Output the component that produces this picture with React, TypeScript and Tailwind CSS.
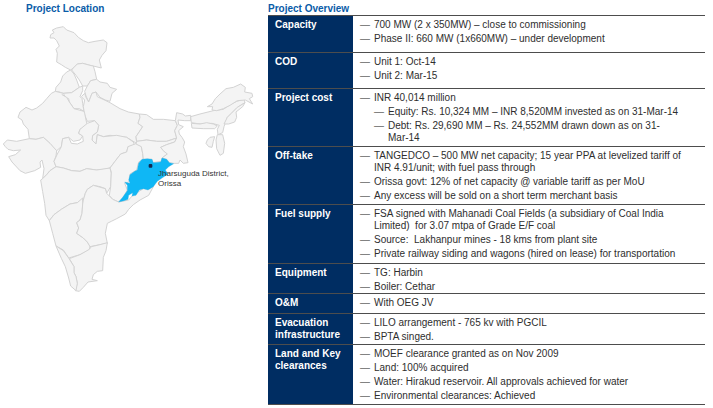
import { Fragment } from "react";

type Item = { lines: string[]; nested?: boolean };
type Row = { label: string[]; height: string; items: Item[] };

const rows: Row[] = [
  {
    label: ["Capacity"],
    height: "h-[37px]",
    items: [
      { lines: ["700 MW (2 x 350MW) – close to commissioning"] },
      { lines: ["Phase II: 660 MW (1x660MW) – under development"] },
    ],
  },
  {
    label: ["COD"],
    height: "h-9",
    items: [{ lines: ["Unit 1: Oct-14"] }, { lines: ["Unit 2: Mar-15"] }],
  },
  {
    label: ["Project cost"],
    height: "h-[58px]",
    items: [
      { lines: ["INR 40,014 million"] },
      { lines: ["Equity: Rs. 10,324 MM – INR 8,520MM invested as on 31-Mar-14"], nested: true },
      { lines: ["Debt: Rs. 29,690 MM – Rs. 24,552MM drawn down as on 31-", "Mar-14"], nested: true },
    ],
  },
  {
    label: ["Off-take"],
    height: "h-[58px]",
    items: [
      { lines: ["TANGEDCO – 500 MW net capacity; 15 year PPA at levelized tariff of", "INR 4.91/unit; with fuel pass through"] },
      { lines: ["Orissa govt: 12% of net capacity @ variable tariff as per MoU"] },
      { lines: ["Any excess will be sold on a short term merchant basis"] },
    ],
  },
  {
    label: ["Fuel supply"],
    height: "h-[59px]",
    items: [
      { lines: ["FSA signed with Mahanadi Coal Fields (a subsidiary of Coal India", "Limited)\u00a0 for 3.07 mtpa of Grade E/F coal"] },
      { lines: ["Source:\u00a0 Lakhanpur mines - 18 kms from plant site"] },
      { lines: ["Private railway siding and wagons (hired on lease) for transportation"] },
    ],
  },
  {
    label: ["Equipment"],
    height: "h-[30px]",
    items: [{ lines: ["TG: Harbin"] }, { lines: ["Boiler: Cethar"] }],
  },
  { label: ["O&M"], height: "h-5", items: [{ lines: ["With OEG JV"] }] },
  {
    label: ["Evacuation", "infrastructure"],
    height: "h-[31px]",
    items: [{ lines: ["LILO arrangement - 765 kv with PGCIL"] }, { lines: ["BPTA singed."] }],
  },
  {
    label: ["Land and Key", "clearances"],
    height: "h-[60px]",
    items: [
      { lines: ["MOEF clearance granted as on Nov 2009"] },
      { lines: ["Land: 100% acquired"] },
      { lines: ["Water: Hirakud reservoir. All approvals achieved for water"] },
      { lines: ["Environmental clearances: Achieved"] },
    ],
  },
];

const states: string[] = [
  // Jammu & Kashmir
  "M157,90 L170,84 190,80 200,90 222,98 235,112 250,122 265,128 285,124 310,120 321,128 318,152 306,166 298,180 304,204 288,200 270,196 248,190 232,192 220,204 212,210 196,202 184,194 170,186 172,160 168,148 178,138 170,122 162,114 150,114 152,104 162,98 Z",
  // Himachal Pradesh
  "M232,192 L248,190 270,196 280,198 285,215 290,238 272,242 262,258 248,258 238,240 228,226 215,210 220,204 Z",
  // Punjab
  "M212,210 L200,216 188,228 182,246 168,262 166,274 178,276 190,280 215,278 238,262 230,240 222,222 Z",
  // Haryana
  "M190,280 L196,292 206,296 208,306 222,326 238,326 252,334 248,310 246,296 240,290 248,272 248,258 238,262 215,278 Z",
  // Uttarakhand
  "M290,238 L300,246 322,250 330,262 350,268 336,280 330,304 316,300 300,292 288,276 276,280 266,306 258,288 254,274 262,258 272,242 Z",
  // Uttar Pradesh
  "M276,280 L288,276 292,290 330,308 360,326 385,336 418,342 420,352 414,370 428,380 420,392 408,410 410,430 396,422 380,412 350,408 330,406 310,410 292,404 288,432 276,420 278,406 292,396 296,376 284,362 262,364 254,345 250,320 254,300 244,290 254,280 258,292 266,306 Z",
  // Rajasthan
  "M166,274 L154,280 140,296 128,310 110,324 96,330 78,322 60,336 54,352 66,360 70,372 84,388 88,416 108,418 130,412 150,430 162,446 170,452 184,440 188,416 206,412 220,424 240,420 248,408 236,400 240,388 262,376 258,360 254,340 252,334 222,326 208,306 200,292 186,284 190,280 Z",
  // Gujarat
  "M10,432 L22,420 50,424 88,416 108,418 130,412 150,430 170,452 168,468 162,484 168,500 150,512 140,524 128,536 132,506 126,480 120,486 122,502 104,512 76,520 60,512 36,486 26,470 46,464 62,450 40,452 24,448 16,440 Z",
  // Madhya Pradesh
  "M188,416 L206,412 214,430 232,432 250,424 248,408 236,400 240,388 262,370 284,362 296,376 292,396 278,406 276,420 288,432 292,404 310,410 350,406 380,412 400,426 404,436 384,440 380,456 362,462 345,484 330,504 312,508 290,510 260,506 240,514 215,512 190,504 168,500 162,484 172,462 184,440 Z",
  // Maharashtra
  "M128,536 L140,524 150,512 168,500 190,504 215,512 240,514 260,506 290,510 330,504 334,520 332,560 320,580 316,566 300,560 280,556 262,568 256,580 250,600 232,608 210,612 184,628 162,644 148,662 138,646 134,610 128,575 122,540 Z",
  // Chhattisgarh
  "M410,430 L424,440 428,460 430,478 416,486 410,510 390,522 388,545 374,550 382,570 370,592 356,606 338,598 328,586 332,560 334,516 330,504 345,484 362,462 380,456 384,440 Z",
  // Karnataka
  "M148,662 L162,644 184,628 210,612 232,608 248,594 248,612 246,640 240,660 230,668 236,684 230,700 250,714 262,726 270,738 268,750 240,764 206,774 190,750 168,738 158,700 Z",
  // Andhra Pradesh
  "M256,580 L262,568 280,556 316,566 320,580 338,598 356,606 386,600 396,588 430,566 460,560 446,586 420,600 400,614 386,628 376,642 350,656 334,664 322,670 316,700 322,730 300,734 270,740 262,726 250,714 230,700 236,684 230,668 240,660 246,640 248,612 250,600 Z",
  // Tamil Nadu
  "M322,728 L318,752 310,772 308,812 292,814 280,824 276,838 292,842 264,846 250,862 238,874 226,872 232,850 228,830 222,818 222,800 208,776 240,764 268,748 274,740 300,734 Z",
  // Kerala
  "M168,738 L190,752 206,774 222,800 222,818 228,830 232,850 228,872 212,858 206,834 196,800 184,775 Z",
  // Bihar
  "M418,342 L440,344 460,358 490,358 526,362 532,376 524,392 530,414 500,424 470,424 440,420 410,424 408,410 420,392 428,380 414,370 420,352 Z",
  // Jharkhand
  "M410,424 L440,420 470,424 500,424 530,414 524,426 500,434 482,442 490,452 502,462 486,474 484,484 458,488 456,478 430,478 428,460 424,440 408,432 Z",
  // West Bengal
  "M530,338 L548,342 556,348 572,346 572,362 554,362 534,360 536,374 550,380 536,392 538,402 546,412 554,426 550,440 558,462 564,488 550,490 540,480 536,490 520,490 508,488 500,478 486,474 502,462 490,452 482,442 500,434 524,426 530,414 524,392 532,376 526,362 Z",
  // Assam
  "M572,350 L600,342 640,332 670,328 690,314 710,304 732,298 735,308 712,322 694,340 682,352 672,380 668,398 654,404 652,388 658,376 636,370 600,372 574,368 Z",
  // Meghalaya
  "M574,370 L600,372 620,368 640,372 652,378 644,386 610,386 576,384 Z",
  // Arunachal Pradesh
  "M622,320 L636,312 646,296 660,282 678,266 700,262 722,252 736,262 734,276 756,280 758,290 748,296 758,312 736,300 712,302 690,316 670,326 650,332 636,330 638,320 Z",
  // Nagaland and Manipur
  "M735,308 L728,320 708,336 710,352 704,366 686,372 672,372 682,352 694,340 712,322 Z",
  // Tripura
  "M622,420 L630,412 644,410 640,424 636,442 626,440 618,430 Z",
  // Mizoram
  "M652,404 L668,404 674,430 670,460 660,466 650,446 648,420 Z",
];

const orissa =
  "M356,606 L368,592 382,572 382,556 374,546 390,550 386,540 390,524 404,514 412,510 416,490 426,478 442,476 456,478 460,488 482,486 486,474 500,478 508,488 521,491 506,500 496,510 504,522 486,534 472,544 460,560 444,570 430,566 418,570 408,586 396,588 398,578 386,586 384,598 372,602 Z";

function IndiaMap() {
  return (
    <div className="relative">
      <svg viewBox="0 60 804 840" className="block w-full" role="img" aria-label="Map of India with Orissa highlighted">
        <g fill="#f4f4f4" stroke="#d3d3d3" strokeWidth="3" strokeLinejoin="round">
          {states.map((d) => (
            <path key={d} d={d} />
          ))}
        </g>
        <path d={orissa} fill="#0fb7f5" stroke="#3aaede" strokeWidth="1" strokeLinejoin="round" />
        <rect x="446" y="492" width="11" height="11" rx="3" fill="#14284f" />
      </svg>
      <p className="absolute left-[158px] top-[149px] text-[8px] leading-[10px] text-[#333]">
        Jharsuguda District,
        <br />
        Orissa
      </p>
    </div>
  );
}

function Lines({ lines }: { lines: string[] }) {
  return (
    <>
      {lines.map((line, i) => (
        <Fragment key={line}>
          {i > 0 && <br />}
          {line}
        </Fragment>
      ))}
    </>
  );
}

export default function App() {
  return (
    <main className="flex items-start bg-white pr-2 pt-[3px] font-['Liberation_Sans',Arial,sans-serif] text-[10px] leading-3 text-[#2e2e2e]">
      <section className="w-[268px] shrink-0">
        <h2 className="pb-[5px] pl-[26px] font-bold text-[#0a5ca8]">Project Location</h2>
        <IndiaMap />
      </section>
      <section className="min-w-0 flex-1">
        <h2 className="font-bold text-[#0a5ca8]">Project Overview</h2>
        <table className="w-full border-separate border-spacing-0 border-b border-[#4d4d4d]">
          <tbody>
            {rows.map((row) => (
              <tr key={row.label[0]} className={row.height}>
                <th
                  scope="row"
                  className="w-[85px] border-t border-[#4d4d4d] bg-[#002d62] pl-[7px] pt-[3px] text-left align-top font-bold whitespace-nowrap text-white"
                >
                  <Lines lines={row.label} />
                </th>
                <td className="border-t border-[#4d4d4d] pl-[7px] pt-[3px] align-top">
                  <ul className="flex flex-col gap-0.5">
                    {row.items.map((item) => (
                      <li key={item.lines[0]} className={item.nested ? "flex gap-1 pl-3.5" : "flex gap-1"}>
                        <span className="text-[#666]">—</span>
                        <span>
                          <Lines lines={item.lines} />
                        </span>
                      </li>
                    ))}
                  </ul>
                </td>
              </tr>
            ))}
          </tbody>
        </table>
      </section>
    </main>
  );
}
